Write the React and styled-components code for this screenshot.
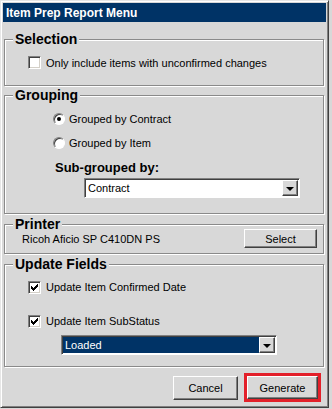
import React from 'react';
import styled, { createGlobalStyle } from 'styled-components';

const GlobalStyle = createGlobalStyle`
  html, body {
    margin: 0;
    padding: 0;
    background: #d8d8d8;
  }
  body {
    font-family: "Liberation Sans", Arial, sans-serif;
    font-size: 11px;
    color: #000;
  }
`;

const Window = styled.div`
  width: 329px;
  height: 408px;
  box-sizing: border-box;
  border-style: solid;
  border-width: 1px;
  border-color: #e6e6e6 #404040 #404040 #e6e6e6;
  box-shadow: inset 1px 1px #fff, inset -1px -1px #808080;
  padding: 2px;
  background: #d8d8d8;
  display: flex;
  flex-direction: column;
`;

const TitleBar = styled.div`
  height: 19px;
  flex: none;
  background: #003366;
  color: #fff;
  font-weight: bold;
  font-size: 12px;
  padding-left: 3px;
  display: flex;
  align-items: center;
`;

const Body = styled.div`
  padding: 0 2px 0 1px;
  display: flex;
  flex-direction: column;
`;

const GroupBox = styled.fieldset`
  margin: ${p => p.$top}px 0 0;
  padding: 0;
  min-width: 0;
  border: 1px solid #8a8a8a;
  box-shadow: 1px 1px 0 #fff, inset 1px 1px 0 #fff;
`;

const Legend = styled.legend`
  margin-left: 8px;
  padding: 0 2px;
  font-size: 14px;
  line-height: 16px;
  font-weight: bold;
  background: #d8d8d8;
`;

const Content = styled.div`
  display: flex;
  flex-direction: column;
  margin-top: ${p => p.$mt || 0}px;
  padding: ${p => p.$pt || 0}px ${p => p.$pr || 0}px ${p => p.$pb || 0}px ${p => p.$pl || 0}px;
`;

const OptionRow = styled.label`
  display: flex;
  align-items: center;
  gap: ${p => p.$gap}px;
  height: ${p => p.$h || 16}px;
  margin-top: ${p => p.$mt || 0}px;
`;

const CheckBox = styled.span`
  width: 13px;
  height: 13px;
  box-sizing: border-box;
  flex: none;
  background: #fff;
  border-style: solid;
  border-width: 1px;
  border-color: #808080 #fff #fff #808080;
  box-shadow: inset 1px 1px #404040, inset -1px -1px #d4d0c8;
  display: flex;
  align-items: center;
  justify-content: center;
`;

const Radio = styled.span`
  width: 12px;
  height: 12px;
  box-sizing: border-box;
  flex: none;
  border-radius: 50%;
  background: #fff;
  border-style: solid;
  border-width: 1px;
  border-color: #808080 #fff #fff #808080;
  box-shadow: inset 1px 1px #404040;
  display: flex;
  align-items: center;
  justify-content: center;

  &::after {
    content: '';
    width: 4px;
    height: 4px;
    border-radius: 50%;
    background: ${p => (p.$checked ? '#000' : 'transparent')};
  }
`;

const SubLabel = styled.div`
  font-size: 13px;
  line-height: 16px;
  font-weight: bold;
  margin: 9px 0 0 2px;
`;

const Combo = styled.div`
  width: 216px;
  height: 20px;
  box-sizing: border-box;
  margin: ${p => p.$mt}px 0 0 ${p => p.$ml}px;
  background: #fff;
  border-style: solid;
  border-width: 1px;
  border-color: #808080 #fff #fff #808080;
  box-shadow: inset 1px 1px #404040;
  padding: 1px 1px 1px 1px;
  display: flex;
`;

const ComboText = styled.div`
  flex: 1;
  display: flex;
  align-items: center;
  padding-left: 2px;
  background: ${p => (p.$selected ? '#003366' : '#fff')};
  color: ${p => (p.$selected ? '#fff' : '#000')};
`;

const DropButton = styled.div`
  width: 16px;
  flex: none;
  box-sizing: border-box;
  background: #d8d8d8;
  border-style: solid;
  border-width: 1px;
  border-color: #fff #404040 #404040 #fff;
  box-shadow: inset -1px -1px #808080;
  display: flex;
  align-items: center;
  justify-content: center;

  &::after {
    content: '';
    border-left: 4px solid transparent;
    border-right: 4px solid transparent;
    border-top: 4px solid #000;
    margin-top: 1px;
  }
`;

const PrinterRow = styled.div`
  display: flex;
  align-items: center;
  justify-content: space-between;
  height: 19px;
`;

const Button = styled.button`
  width: ${p => p.$w}px;
  height: ${p => p.$h}px;
  box-sizing: border-box;
  font-family: "Liberation Sans", Arial, sans-serif;
  font-size: 11px;
  color: #000;
  background: #d8d8d8;
  border-style: solid;
  border-width: 1px;
  border-color: #fff #404040 #404040 #fff;
  box-shadow: inset -1px -1px #808080;
  padding: 0;
`;

const Highlight = styled.span`
  display: flex;
  border: 3px solid #e3202a;
`;

const ButtonBar = styled.div`
  display: flex;
  align-items: center;
  justify-content: flex-end;
  gap: 6px;
  margin-top: 6px;
  padding-right: 3px;
`;

function Check({ checked }) {
  return (
    <CheckBox>
      {checked ? (
        <svg width="7" height="7" viewBox="0 0 7 7">
          <path d="M0 2h1v1h1v1h1v-1h1v-1h1v-1h1v-1h1v3h-1v1h-1v1h-1v1h-1v1h-1v-1h-1v-1h-1z" fill="#000" />
        </svg>
      ) : null}
    </CheckBox>
  );
}

export default function App() {
  return (
    <>
      <GlobalStyle />
      <Window>
        <TitleBar>Item Prep Report Menu</TitleBar>
        <Body>
          <GroupBox $top={9}>
            <Legend>Selection</Legend>
            <Content $pt={9} $pb={16} $pl={23}>
              <OptionRow $gap={5} $h={13}>
                <Check />
                Only include items with unconfirmed changes
              </OptionRow>
            </Content>
          </GroupBox>

          <GroupBox $top={1}>
            <Legend>Grouping</Legend>
            <Content $pt={8} $pb={15} $pl={48}>
              <OptionRow $gap={4}>
                <Radio $checked />
                Grouped by Contract
              </OptionRow>
              <OptionRow $gap={4} $mt={8}>
                <Radio />
                Grouped by Item
              </OptionRow>
              <SubLabel>Sub-grouped by:</SubLabel>
              <Combo $mt={2} $ml={31}>
                <ComboText>Contract</ComboText>
                <DropButton />
              </Combo>
            </Content>
          </GroupBox>

          <GroupBox $top={2}>
            <Legend>Printer</Legend>
            <Content $mt={-3} $pb={5} $pl={17} $pr={6}>
              <PrinterRow>
                Ricoh Aficio SP C410DN PS
                <Button $w={73} $h={19}>Select</Button>
              </PrinterRow>
            </Content>
          </GroupBox>

          <GroupBox $top={2}>
            <Legend>Update Fields</Legend>
            <Content $pt={7} $pb={11} $pl={23}>
              <OptionRow $gap={5}>
                <Check checked />
                Update Item Confirmed Date
              </OptionRow>
              <OptionRow $gap={5} $mt={18}>
                <Check checked />
                Update Item SubStatus
              </OptionRow>
              <Combo $mt={6} $ml={33}>
                <ComboText $selected>Loaded</ComboText>
                <DropButton />
              </Combo>
            </Content>
          </GroupBox>

          <ButtonBar>
            <Button $w={65} $h={24}>Cancel</Button>
            <Highlight>
              <Button $w={71} $h={23}>Generate</Button>
            </Highlight>
          </ButtonBar>
        </Body>
      </Window>
    </>
  );
}
